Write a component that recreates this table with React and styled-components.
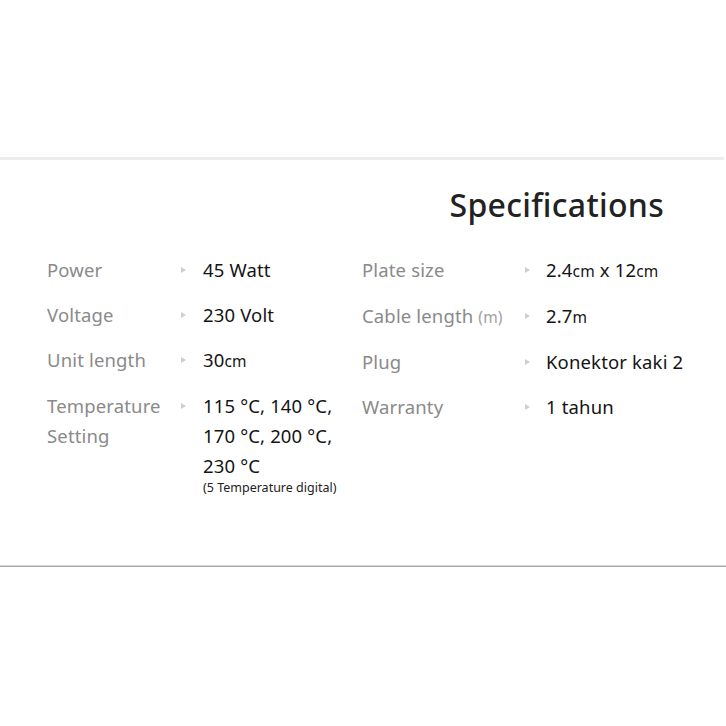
import React from "react";
import styled, { createGlobalStyle } from "styled-components";

const GlobalStyle = createGlobalStyle`
  body {
    margin: 0;
    background: #fff;
    font-family: "Noto Sans", sans-serif;
  }
`;

const Page = styled.div`
  width: 726px;
  padding-top: 157px;
`;

const TopRule = styled.div`
  width: 724px;
  height: 3px;
  background: #ededed;
`;

const BottomRule = styled.div`
  height: 2px;
  background: linear-gradient(#d6d6d6 0 1px, #a9a9a9 1px 2px);
`;

const Section = styled.section`
  height: 405px;
  padding-top: 25px;
  box-sizing: border-box;
`;

const Title = styled.h2`
  margin: 0 62px 0 0;
  text-align: right;
  font-size: 32px;
  line-height: 40px;
  letter-spacing: 0.3px;
  font-weight: 500;
  color: #222;
`;

const Columns = styled.div`
  display: grid;
  grid-template-columns: 315px auto;
  padding: 30px 0 0 47px;
`;

const Column = styled.div`
  display: flex;
  flex-direction: column;
  gap: 15px;
`;

const Row = styled.div`
  display: grid;
  grid-template-columns: ${(p) => p.$label}px ${(p) => p.$arrow}px 1fr;
  font-size: 18.5px;
  line-height: 30px;
  letter-spacing: 0.15px;
`;

const Label = styled.div`
  color: #8a8a8a;
  white-space: nowrap;
`;

const Unit = styled.span`
  font-size: 15.5px;
  color: ${(p) => (p.$muted ? "#a0a0a0" : "inherit")};
`;

const Arrow = styled.div`
  display: flex;
  align-items: center;
  height: 30px;
  &::before {
    content: "";
    border-left: 5px solid #cfcfcf;
    border-top: 3px solid transparent;
    border-bottom: 3px solid transparent;
  }
`;

const Value = styled.div`
  color: #141414;
`;

const Note = styled.div`
  font-size: 12.5px;
  line-height: 14px;
  letter-spacing: 0;
  color: #222;
`;

const left = [
  { label: "Power", value: "45 Watt" },
  { label: "Voltage", value: "230 Volt" },
  { label: "Unit length", value: <>30<Unit>cm</Unit></> },
  {
    label: <>Temperature<br />Setting</>,
    value: (
      <>
        115 °C, 140 °C,<br />170 °C, 200 °C,<br />230 °C
        <Note>(5 Temperature digital)</Note>
      </>
    ),
  },
];

const right = [
  { label: "Plate size", value: <>2.4<Unit>cm</Unit> x 12<Unit>cm</Unit></> },
  { label: <>Cable length <Unit $muted>(m)</Unit></>, value: <>2.7<Unit>m</Unit></> },
  { label: "Plug", value: "Konektor kaki 2" },
  { label: "Warranty", value: "1 tahun" },
];

const Spec = ({ label, value, labelWidth, arrowWidth }) => (
  <Row $label={labelWidth} $arrow={arrowWidth}>
    <Label>{label}</Label>
    <Arrow />
    <Value>{value}</Value>
  </Row>
);

export default function App() {
  return (
    <Page>
      <GlobalStyle />
      <TopRule />
      <Section>
        <Title>Specifications</Title>
        <Columns>
          <Column>
            {left.map((s, i) => (
              <Spec key={i} {...s} labelWidth={134} arrowWidth={22} />
            ))}
          </Column>
          <Column>
            {right.map((s, i) => (
              <Spec key={i} {...s} labelWidth={163} arrowWidth={21} />
            ))}
          </Column>
        </Columns>
      </Section>
      <BottomRule />
    </Page>
  );
}
